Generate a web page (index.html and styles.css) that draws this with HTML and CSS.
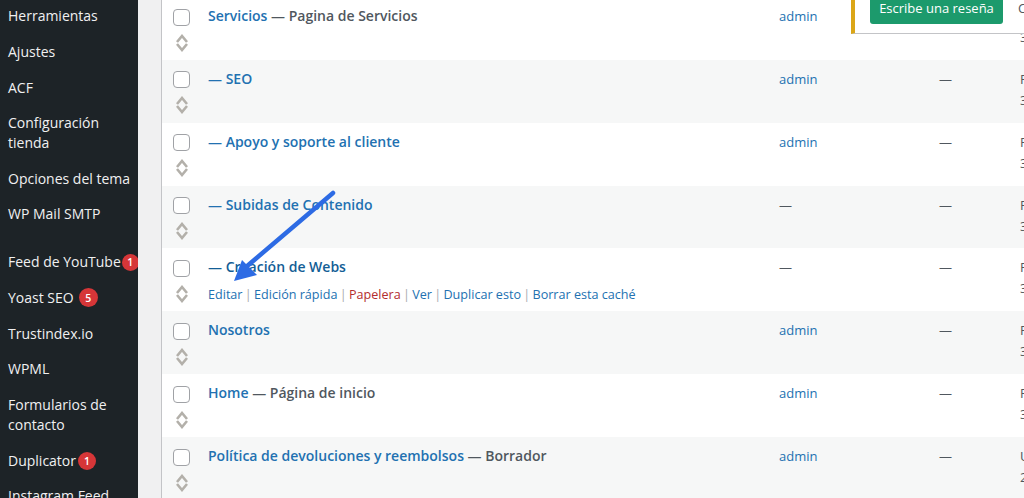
FILE: index.html
```html
<!DOCTYPE html>
<html lang="es">
<head>
<meta charset="utf-8">
<title>Páginas</title>
<link rel="stylesheet" href="styles.css">
</head>
<body>
<svg class="defs" width="0" height="0" aria-hidden="true">
  <symbol id="sort" viewBox="0 0 14 18">
    <path d="M2 8 7 2 12 8M2 10 7 16 12 10" fill="none" stroke="#b3b0aa" stroke-width="2.6"/>
  </symbol>
</svg>
<div class="app">
  <nav class="sidebar">
    <a class="item">Herramientas</a>
    <a class="item">Ajustes</a>
    <a class="item">ACF</a>
    <a class="item">Configuración tienda</a>
    <a class="item">Opciones del tema</a>
    <a class="item">WP Mail SMTP</a>
    <div class="sep"></div>
    <a class="item">Feed de YouTube<span class="badge badge-tight">1</span></a>
    <a class="item">Yoast SEO<span class="badge badge-wide">5</span></a>
    <a class="item">Trustindex.io</a>
    <a class="item">WPML</a>
    <a class="item">Formularios de contacto</a>
    <a class="item">Duplicator<span class="badge">1</span></a>
    <a class="item">Instagram Feed</a>
  </nav>
  <main class="content">
    <div class="table">
      <div class="row">
        <span class="check"></span>
        <div class="title"><a>Servicios</a> <span class="state">— Pagina de Servicios</span></div>
        <a class="author">admin</a><span class="dash"></span>
        <div class="date"><span>&nbsp;</span><span>3</span></div>
        <svg class="sort"><use href="#sort"/></svg>
      </div>
      <div class="row">
        <span class="check"></span>
        <div class="title"><a>— SEO</a></div>
        <a class="author">admin</a><span class="dash">—</span>
        <div class="date"><span>P</span><span>3</span></div>
        <svg class="sort"><use href="#sort"/></svg>
      </div>
      <div class="row">
        <span class="check"></span>
        <div class="title"><a>— Apoyo y soporte al cliente</a></div>
        <a class="author">admin</a><span class="dash">—</span>
        <div class="date"><span>P</span><span>3</span></div>
        <svg class="sort"><use href="#sort"/></svg>
      </div>
      <div class="row">
        <span class="check"></span>
        <div class="title"><a>— Subidas de Contenido</a></div>
        <span class="author plain">—</span><span class="dash">—</span>
        <div class="date"><span>P</span><span>3</span></div>
        <svg class="sort"><use href="#sort"/></svg>
      </div>
      <div class="row">
        <span class="check"></span>
        <div class="title"><a class="hover">— Creación de Webs</a></div>
        <span class="author plain">—</span><span class="dash">—</span>
        <div class="date"><span>P</span><span>3</span></div>
        <svg class="sort"><use href="#sort"/></svg>
        <div class="actions"><a>Editar</a><i>|</i><a>Edición rápida</a><i>|</i><a class="trash">Papelera</a><i>|</i><a>Ver</a><i>|</i><a>Duplicar esto</a><i>|</i><a>Borrar esta caché</a></div>
      </div>
      <div class="row">
        <span class="check"></span>
        <div class="title"><a>Nosotros</a></div>
        <a class="author">admin</a><span class="dash">—</span>
        <div class="date"><span>P</span><span>3</span></div>
        <svg class="sort"><use href="#sort"/></svg>
      </div>
      <div class="row">
        <span class="check"></span>
        <div class="title"><a>Home</a> <span class="state">— Página de inicio</span></div>
        <a class="author">admin</a><span class="dash">—</span>
        <div class="date"><span>P</span><span>3</span></div>
        <svg class="sort"><use href="#sort"/></svg>
      </div>
      <div class="row">
        <span class="check"></span>
        <div class="title"><a>Política de devoluciones y reembolsos</a> <span class="state">— Borrador</span></div>
        <a class="author">admin</a><span class="dash">—</span>
        <div class="date"><span>U</span><span>2</span></div>
        <svg class="sort"><use href="#sort"/></svg>
      </div>
    </div>
    <div class="notice"><a class="review">Escribe una reseña</a><span class="notice-next">C</span></div>
    <svg class="arrow" viewBox="0 0 130 100" width="130" height="100" aria-hidden="true">
      <path d="M127 4 40 78" fill="none" stroke="#2d6be4" stroke-width="4.5" stroke-linecap="round"/>
      <path d="M28 92 36 71 51 86Z" fill="#2d6be4"/>
    </svg>
  </main>
</div>
</body>
</html>
```
FILE: styles.css
```css
* { box-sizing: border-box; }
html, body { margin: 0; height: 498px; overflow: hidden; }
body { font-family: "Open Sans", "Noto Sans", sans-serif; background: #f0f0f1; color: #50575e; }
.defs { position: absolute; }
.app { display: flex; height: 498px; overflow: hidden; }

.sidebar { width: 138px; flex: none; background: #1d2327; color: #f0f0f1; font-size: 14px; line-height: 19.5px; margin-top: -2.2px; height: 503px; overflow: hidden; }
.item { display: block; padding: 8.15px 4px 8.15px 8px; }
.sep { height: 12px; }
.badge { display: inline-flex; align-items: center; justify-content: center; width: 18px; height: 18px; margin-left: 2px; border-radius: 50%; background: #d63638; color: #fff; font-size: 10.5px; font-weight: 600; line-height: 18px; vertical-align: 1px; }
.badge-tight { width: 17px; height: 17px; margin-left: 1px; margin-right: -12px; }
.badge-wide { width: 19px; height: 19px; margin-left: 5px; }

.content { position: relative; flex: 1; min-width: 0; padding-left: 23px; }
.table { margin-top: -3px; border-left: 1px solid #c3c4c7; background: #fff; }
.row { display: grid; grid-template-columns: 46px 571px 160px 81px 1fr; grid-template-rows: 29px 1fr; height: 62.86px; background: #fff; white-space: nowrap; font-size: 13px; }
.row:nth-child(even) { background: #f6f7f7; }
.check { grid-row: 1; grid-column: 1; width: 17px; height: 17px; margin: 11.5px 0 0 11px; background: #fff; border: 1px solid #a0a2a6; border-radius: 4px; }
.sort { grid-row: 2; grid-column: 1; width: 14px; height: 18px; margin: 7.5px 0 0 13px; }
.title { grid-row: 1; grid-column: 2; padding-top: 9px; font-size: 14px; font-weight: 600; line-height: 20px; color: #2271b1; }
.title a { color: #2271b1; }
.title a.hover { color: #135e96; }
.state { color: #50575e; }
.author { grid-row: 1; grid-column: 3; padding-top: 9px; line-height: 20px; color: #2271b1; }
.author.plain { color: #50575e; }
.dash { grid-row: 1; grid-column: 4; padding-top: 9px; line-height: 20px; color: #50575e; }
.date { grid-row: 1 / span 2; grid-column: 5; display: flex; flex-direction: column; padding-top: 9px; line-height: 21px; color: #50575e; }
.actions { grid-row: 2; grid-column: 2; font-size: 12.6px; line-height: 18px; color: #a7aaad; margin-top: 9px; }
.actions a { color: #2271b1; }
.actions a.trash { color: #b32d2e; }
.actions i { font-style: normal; padding: 0 2.3px; }

.notice { position: absolute; top: -10px; right: 0; width: 173px; height: 44px; display: flex; align-items: flex-start; gap: 15px; padding: 0 0 0 15px; background: #fff; border-left: 4px solid #dba617; border-bottom: 1px solid #c3c4c7; font-size: 13px; }
.review { flex: none; width: 133px; height: 34px; padding-top: 8px; text-align: center; background: #1c9a6c; color: #fff; border-radius: 3px; line-height: 20px; }
.notice-next { padding-top: 8px; line-height: 20px; color: #50575e; }
.arrow { position: absolute; left: 68px; top: 189px; overflow: visible; pointer-events: none; }
```
